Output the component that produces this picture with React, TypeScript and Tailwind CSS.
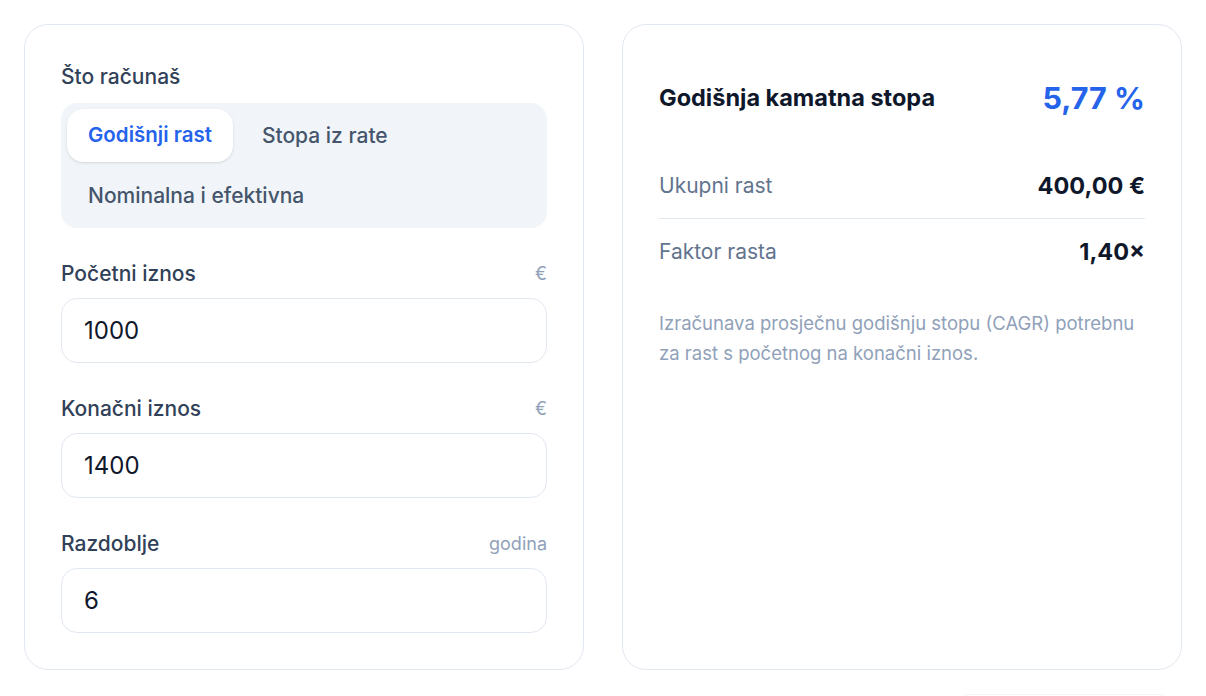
import React from "react";

function Field({ label, unit, value }: { label: string; unit: string; value: string }) {
  return (
    <div className="flex flex-col">
      <div className="flex items-center justify-between mb-2.5">
        <span className="text-[21px] leading-7 font-medium text-slate-700">{label}</span>
        <span className="text-[18px] leading-7 text-slate-400">{unit}</span>
      </div>
      <div className="h-[65px] rounded-2xl border border-slate-200 bg-white px-[22px] flex items-center">
        <span className="text-[24px] text-slate-900">{value}</span>
      </div>
    </div>
  );
}

export default function App() {
  return (
    <div
      className="min-h-screen bg-white px-6 pt-6"
      style={{ fontFamily: "Inter, 'Noto Sans', sans-serif" }}
    >
      <div className="grid grid-cols-2 gap-[38px] w-[1158px]">
        {/* Left card */}
        <div className="rounded-3xl border border-slate-200 bg-white p-9 flex flex-col gap-8">
          <div className="flex flex-col">
            <span className="text-[21px] leading-7 font-medium text-slate-700 mt-[2px] mb-[12px]">Što računaš</span>
            <div className="rounded-2xl bg-slate-100 p-1.5 flex flex-wrap gap-x-2 gap-y-[7px]">
              <div className="rounded-2xl bg-white shadow-sm px-[21px] h-[53px] flex items-center text-[20.5px] font-semibold text-[#2563eb]">
                Godišnji rast
              </div>
              <div className="rounded-2xl px-[21px] h-[53px] flex items-center text-[21px] font-medium text-slate-600">
                Stopa iz rate
              </div>
              <div className="rounded-2xl px-[21px] h-[53px] flex items-center text-[21px] font-medium text-slate-600">
                Nominalna i efektivna
              </div>
            </div>
          </div>
          <Field label="Početni iznos" unit="€" value="1000" />
          <Field label="Konačni iznos" unit="€" value="1400" />
          <Field label="Razdoblje" unit="godina" value="6" />
        </div>

        {/* Right card */}
        <div className="rounded-3xl border border-slate-200 bg-white p-9 flex flex-col">
          <div className="h-[74px] flex items-center justify-between">
            <span className="text-[23.5px] font-bold text-slate-900">Godišnja kamatna stopa</span>
            <span className="text-[30.5px] font-bold text-[#2563eb]">5,77 %</span>
          </div>
          <div className="mt-[18px] flex flex-col">
            <div className="h-[66px] flex items-center justify-between border-b border-slate-200">
              <span className="text-[21px] text-slate-500">Ukupni rast</span>
              <span className="text-[23.5px] font-bold text-slate-900">400,00 €</span>
            </div>
            <div className="h-[66px] flex items-center justify-between">
              <span className="text-[21px] text-slate-500">Faktor rasta</span>
              <span className="text-[23.5px] font-bold text-slate-900">1,40×</span>
            </div>
          </div>
          <p className="mt-[23px] text-[18.5px] leading-[30px] text-slate-400">
            Izračunava prosječnu godišnju stopu (CAGR) potrebnu za rast s početnog na konačni iznos.
          </p>
        </div>
      </div>
      <div className="flex justify-end w-[1158px] mt-6 pr-[14px]">
        <div className="w-[207px] h-8 rounded-t-lg border-t border-x border-slate-100" />
      </div>
    </div>
  );
}
